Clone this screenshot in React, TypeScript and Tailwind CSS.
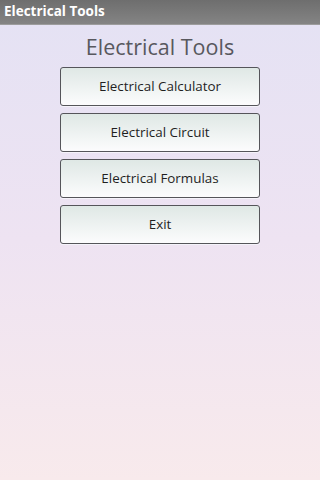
import React from 'react';

const items = ['Electrical Calculator', 'Electrical Circuit', 'Electrical Formulas', 'Exit'];

const App = () => {
  return (
    <div
      className="w-[320px] h-[480px] flex flex-col bg-gradient-to-b from-[#e4e2f4] via-[#eee3f2] to-[#f8eaec]"
      style={{ fontFamily: '"Open Sans", "Noto Sans", sans-serif' }}
    >
      {/* title bar */}
      <div className="h-[25px] shrink-0 flex items-center px-[4px] bg-gradient-to-b from-[#6e6e6e] to-[#848484] border-b border-[#9c9c9c]">
        <span className="text-white font-bold text-[13.5px] leading-none">Electrical Tools</span>
      </div>

      <div className="flex flex-col items-center">
        <h1 className="text-[21.5px] leading-[30px] mt-[7px] text-[#58585e]">Electrical Tools</h1>
        <div className="flex flex-col gap-[7px] mt-[5px]">
          {items.map((label) => (
            <button
              key={label}
              className="w-[200px] h-[39px] rounded-[3px] border border-[#55555a] bg-gradient-to-b from-[#dfe8e5] to-[#fcfcfd] text-[13.4px] text-[#1f1f1f] shadow-[0_1px_0_#f5f3fa]"
            >
              {label}
            </button>
          ))}
        </div>
      </div>
    </div>
  );
};

export default App;
